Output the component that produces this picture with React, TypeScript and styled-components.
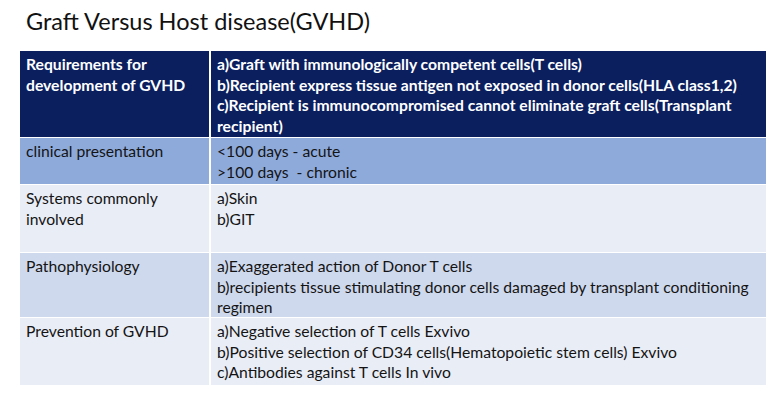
import React from 'react'
import styled, { createGlobalStyle } from 'styled-components'

type Tone = 'head' | 'mid' | 'light' | 'soft'

interface RowData {
  label: string[]
  lines: string[]
  tone: Tone
  height: number
}

const rows: RowData[] = [
  {
    label: ['Requirements for', 'development of GVHD'],
    lines: [
      'a)Graft with immunologically competent cells(T cells)',
      'b)Recipient express tissue antigen not exposed in donor cells(HLA class1,2)',
      'c)Recipient is immunocompromised cannot eliminate graft cells(Transplant recipient)',
    ],
    tone: 'head',
    height: 86,
  },
  {
    label: ['clinical presentation'],
    lines: ['<100 days - acute', '>100 days  - chronic'],
    tone: 'mid',
    height: 46,
  },
  {
    label: ['Systems commonly involved'],
    lines: ['a)Skin', 'b)GIT'],
    tone: 'light',
    height: 67,
  },
  {
    label: ['Pathophysiology'],
    lines: [
      'a)Exaggerated action of Donor T cells',
      'b)recipients tissue stimulating donor cells damaged by transplant conditioning regimen',
    ],
    tone: 'soft',
    height: 64,
  },
  {
    label: ['Prevention of GVHD'],
    lines: [
      'a)Negative selection of T cells Exvivo',
      'b)Positive selection of CD34 cells(Hematopoietic stem cells) Exvivo',
      'c)Antibodies against T cells In vivo',
    ],
    tone: 'light',
    height: 67,
  },
]

const toneBg: Record<Tone, string> = {
  head: '#0b1f5f',
  mid: '#8eaadb',
  light: '#e9edf6',
  soft: '#cfd9ed',
}

const GlobalStyle = createGlobalStyle`
  html, body {
    margin: 0;
    padding: 0;
    background: #ffffff;
  }
  body {
    font-family: Lato, "Open Sans", sans-serif;
    width: 780px;
    height: 402px;
    overflow: hidden;
  }
`

const Slide = styled.div`
  padding: 5px 0 0 20px;
`

const Title = styled.h1`
  margin: 0 0 13px 6px;
  font-family: Lato, "Open Sans", sans-serif;
  font-weight: 400;
  font-size: 23.5px;
  line-height: 33px;
  color: #111111;
`

const Grid = styled.div`
  display: grid;
  grid-template-columns: 189px 555px;
  column-gap: 2px;
  row-gap: 1px;
  width: 746px;
`

const Cell = styled.div<{ $tone: Tone; $h: number }>`
  background: ${p => toneBg[p.$tone]};
  color: ${p => (p.$tone === 'head' ? '#ffffff' : '#141414')};
  font-weight: ${p => (p.$tone === 'head' ? 700 : 400)};
  font-size: 15.7px;
  line-height: 20.5px;
  height: ${p => p.$h}px;
  box-sizing: border-box;
  padding: 3px 6px 0 6px;
  white-space: pre-wrap;
`

const Line = styled.div``

export default function App() {
  return (
    <>
      <GlobalStyle />
      <Slide>
        <Title>Graft Versus Host disease(GVHD)</Title>
        <Grid>
          {rows.map(row => (
            <React.Fragment key={row.label.join(' ')}>
              <Cell $tone={row.tone} $h={row.height}>
                {row.label.map(l => <Line key={l}>{l}</Line>)}
              </Cell>
              <Cell $tone={row.tone} $h={row.height}>
                {row.lines.map(l => <Line key={l}>{l}</Line>)}
              </Cell>
            </React.Fragment>
          ))}
        </Grid>
      </Slide>
    </>
  )
}
